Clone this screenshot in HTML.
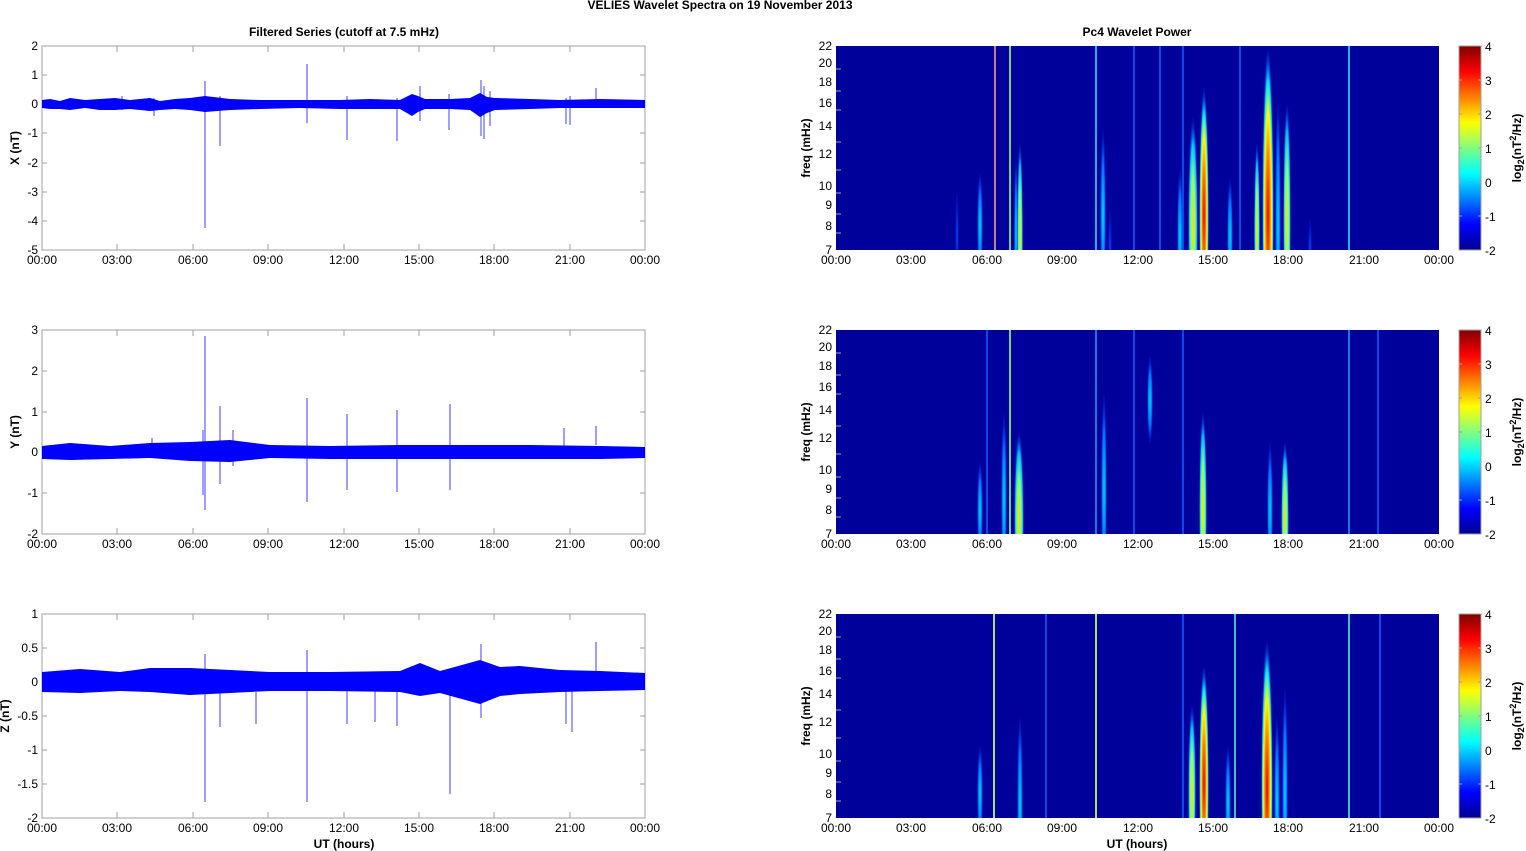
<!DOCTYPE html>
<html><head><meta charset="utf-8"><style>
html,body{margin:0;padding:0;background:#fff;width:1526px;height:851px;overflow:hidden;}
svg{display:block;font-family:"Liberation Sans",Arial,sans-serif;}
.t{font-size:12px;fill:#000}
.b{font-size:12px;font-weight:bold;fill:#000}
.ax{fill:none;stroke:#a0a0a0;stroke-width:1}
.tk{stroke:#a0a0a0;stroke-width:1}
.sp{stroke:#0000ff;stroke-width:1;opacity:.75}
</style></head><body>
<svg width="1526" height="851" viewBox="0 0 1526 851" xmlns="http://www.w3.org/2000/svg" overflow="hidden">
<defs>
<clipPath id="cp"><rect x="836" y="0" width="603" height="204"/></clipPath>
<linearGradient id="jet" x1="0" y1="1" x2="0" y2="0">
<stop offset="0" stop-color="#00008f"/><stop offset=".125" stop-color="#0000ff"/>
<stop offset=".375" stop-color="#00ffff"/><stop offset=".625" stop-color="#ffff00"/>
<stop offset=".875" stop-color="#ff0000"/><stop offset="1" stop-color="#800000"/>
</linearGradient>
<radialGradient id="gR"><stop offset="0" stop-color="#e00000"/><stop offset=".35" stop-color="#ff8000"/><stop offset=".6" stop-color="#ffff00"/><stop offset=".8" stop-color="#00e0ff"/><stop offset="1" stop-color="#0030ff" stop-opacity="0"/></radialGradient>
<radialGradient id="gY"><stop offset="0" stop-color="#ffe000"/><stop offset=".45" stop-color="#80ff80"/><stop offset=".75" stop-color="#00c0ff"/><stop offset="1" stop-color="#0030ff" stop-opacity="0"/></radialGradient>
<radialGradient id="gC"><stop offset="0" stop-color="#00e0ff"/><stop offset=".6" stop-color="#0070ff"/><stop offset="1" stop-color="#0030ff" stop-opacity="0"/></radialGradient>
<radialGradient id="gB"><stop offset="0" stop-color="#0050ff"/><stop offset="1" stop-color="#0030ff" stop-opacity="0"/></radialGradient>
<g id="xt">
<text class="t" x="42" y="14" text-anchor="middle">00:00</text><text class="t" x="117" y="14" text-anchor="middle">03:00</text><text class="t" x="193" y="14" text-anchor="middle">06:00</text><text class="t" x="268" y="14" text-anchor="middle">09:00</text><text class="t" x="344" y="14" text-anchor="middle">12:00</text><text class="t" x="419" y="14" text-anchor="middle">15:00</text><text class="t" x="494" y="14" text-anchor="middle">18:00</text><text class="t" x="570" y="14" text-anchor="middle">21:00</text><text class="t" x="645" y="14" text-anchor="middle">00:00</text>
</g>
<g id="vt">
<path class="tk" d="M117 0v6M193 0v6M268 0v6M344 0v6M419 0v6M494 0v6M570 0v6M117 204v-6M193 204v-6M268 204v-6M344 204v-6M419 204v-6M494 204v-6M570 204v-6"/>
</g>
<g id="cb">
<rect x="1459" y="0" width="22" height="204" fill="url(#jet)" stroke="#a0a0a0"/>
<path class="tk" d="M1459 34h3M1459 68h3M1459 102h3M1459 136h3M1459 170h3M1481 34h-3M1481 68h-3M1481 102h-3M1481 136h-3M1481 170h-3"/>
<text class="t" x="1485" y="5">4</text><text class="t" x="1485" y="39">3</text><text class="t" x="1485" y="73">2</text><text class="t" x="1485" y="107">1</text><text class="t" x="1485" y="141">0</text><text class="t" x="1485" y="175">-1</text><text class="t" x="1485" y="209">-2</text>
<text class="b" transform="translate(1521 102) rotate(-90)" text-anchor="middle">log<tspan font-size="9" dy="3">2</tspan><tspan dy="-3">(nT</tspan><tspan font-size="9" dy="-5">2</tspan><tspan dy="5">/Hz)</tspan></text>
</g>
<g id="fy">
<text class="t" x="832" y="4" text-anchor="end">22</text><text class="t" x="832" y="21" text-anchor="end">20</text><text class="t" x="832" y="40" text-anchor="end">18</text><text class="t" x="832" y="61" text-anchor="end">16</text><text class="t" x="832" y="84" text-anchor="end">14</text><text class="t" x="832" y="112" text-anchor="end">12</text><text class="t" x="832" y="144" text-anchor="end">10</text><text class="t" x="832" y="163" text-anchor="end">9</text><text class="t" x="832" y="184" text-anchor="end">8</text><text class="t" x="832" y="208" text-anchor="end">7</text>
<text class="b" transform="translate(810 102) rotate(-90)" text-anchor="middle">freq (mHz)</text>
<path class="tk" d="M836 23h5M836 45h5M836 64h5M836 96h5M836 124h5M836 147h5M836 168h5M836 187h5"/>
</g>
</defs>

<text class="b" x="720" y="9" text-anchor="middle">VELIES Wavelet Spectra on 19 November  2013</text>
<text class="b" x="344" y="36" text-anchor="middle">Filtered Series (cutoff at 7.5 mHz)</text>
<text class="b" x="1137" y="36" text-anchor="middle">Pc4 Wavelet Power</text>

<g transform="translate(0,46)">
<rect x="42" y="0" width="603" height="204" class="ax"/>
<use href="#vt"/>
<path class="tk" d="M42 29h5M42 58h5M42 87h5M42 117h5M42 146h5M42 175h5M645 29h-5M645 58h-5M645 87h-5M645 117h-5M645 146h-5M645 175h-5"/>
<text class="t" x="38" y="4" text-anchor="end">2</text><text class="t" x="38" y="33" text-anchor="end">1</text><text class="t" x="38" y="62" text-anchor="end">0</text><text class="t" x="38" y="91" text-anchor="end">-1</text><text class="t" x="38" y="121" text-anchor="end">-2</text><text class="t" x="38" y="150" text-anchor="end">-3</text><text class="t" x="38" y="179" text-anchor="end">-4</text><text class="t" x="38" y="208" text-anchor="end">-5</text>
<text class="b" transform="translate(19 102) rotate(-90)" text-anchor="middle">X (nT)</text>
<path fill="#0000ff" d="M42 54 L50 53 L60 55 L70 52 L85 54 L100 53 L115 52 L130 54 L150 52 L160 55 L175 53 L190 52 L205 50 L230 53 L260 54 L300 54 L340 54 L370 53 L400 54 L412 48 L418 50 L425 53 L450 53 L470 52 L480 47 L487 51 L495 52 L530 53 L560 54 L600 53 L645 54 L645 62 L600 62 L560 62 L530 63 L495 64 L487 67 L480 71 L470 64 L450 63 L425 63 L418 66 L412 70 L400 63 L370 63 L340 63 L300 62 L260 63 L230 64 L205 66 L190 64 L175 63 L160 64 L150 65 L130 63 L115 64 L100 64 L85 62 L70 64 L60 63 L50 63 L42 62Z"/>
<path class="sp" d="M205 35V182M220 50V100M307 18V77M347 50V94M397 52V95M420 40V75M449 48V84M481 34V90M484 40V93M490 45V80M566 52V78M570 50V79M596 42V60M122 50V64M154 52V70"/>
</g>
<g transform="translate(0,250)"><use href="#xt"/></g>

<g transform="translate(0,330)">
<rect x="42" y="0" width="603" height="204" class="ax"/>
<use href="#vt"/>
<path class="tk" d="M42 41h5M42 82h5M42 122h5M42 163h5M645 41h-5M645 82h-5M645 122h-5M645 163h-5"/>
<text class="t" x="38" y="4" text-anchor="end">3</text><text class="t" x="38" y="45" text-anchor="end">2</text><text class="t" x="38" y="86" text-anchor="end">1</text><text class="t" x="38" y="126" text-anchor="end">0</text><text class="t" x="38" y="167" text-anchor="end">-1</text><text class="t" x="38" y="208" text-anchor="end">-2</text>
<text class="b" transform="translate(19 102) rotate(-90)" text-anchor="middle">Y (nT)</text>
<path fill="#0000ff" d="M42 116 L70 113 L110 116 L150 113 L190 112 L230 110 L270 115 L330 116 L400 115 L470 115 L530 115 L600 116 L645 117 L645 128 L600 129 L530 129 L470 129 L400 129 L330 129 L270 128 L230 132 L190 131 L150 128 L110 129 L70 130 L42 129Z"/>
<path class="sp" d="M205 6V180M220 76V154M233 100V136M307 68V172M347 84V160M397 80V162M450 74V160M203 100V165M596 96V115M564 98V128M152 108V128"/>
</g>
<g transform="translate(0,534)"><use href="#xt"/></g>

<g transform="translate(0,614)">
<rect x="42" y="0" width="603" height="204" class="ax"/>
<use href="#vt"/>
<path class="tk" d="M42 34h5M42 68h5M42 102h5M42 136h5M42 170h5M645 34h-5M645 68h-5M645 102h-5M645 136h-5M645 170h-5"/>
<text class="t" x="38" y="4" text-anchor="end">1</text><text class="t" x="38" y="38" text-anchor="end">0.5</text><text class="t" x="38" y="72" text-anchor="end">0</text><text class="t" x="38" y="106" text-anchor="end">-0.5</text><text class="t" x="38" y="140" text-anchor="end">-1</text><text class="t" x="38" y="174" text-anchor="end">-1.5</text><text class="t" x="38" y="208" text-anchor="end">-2</text>
<text class="b" transform="translate(9 102) rotate(-90)" text-anchor="middle">Z (nT)</text>
<path fill="#0000ff" d="M42 58 L80 55 L120 58 L150 54 L190 54 L230 56 L270 58 L330 58 L400 57 L420 49 L440 57 L480 46 L500 53 L520 52 L560 56 L600 57 L645 59 L645 76 L600 77 L560 78 L520 80 L500 82 L480 90 L440 79 L420 82 L400 78 L330 77 L270 77 L230 79 L190 81 L150 78 L120 77 L80 79 L42 78Z"/>
<path class="sp" d="M205 40V188M220 70V113M256 78V110M307 36V188M347 70V110M375 70V108M397 70V112M450 60V180M481 30V104M566 60V110M572 60V118M596 28V60"/>
</g>
<g transform="translate(0,818)"><use href="#xt"/></g>
<text class="b" x="344" y="848" text-anchor="middle">UT (hours)</text>

<g transform="translate(0,46)">
<rect x="836" y="0" width="603" height="204" fill="#00009a"/>
<g clip-path="url(#cp)">
<ellipse cx="980" cy="180" rx="3" ry="55" fill="url(#gC)"/>
<ellipse cx="957" cy="190" rx="2" ry="50" fill="url(#gB)"/>
<ellipse cx="1020" cy="190" rx="3" ry="95" fill="url(#gY)"/>
<ellipse cx="1016" cy="190" rx="2" ry="80" fill="url(#gC)"/>
<ellipse cx="1103" cy="170" rx="3" ry="90" fill="url(#gC)"/>
<ellipse cx="1110" cy="200" rx="2" ry="40" fill="url(#gB)"/>
<ellipse cx="1180" cy="190" rx="3" ry="70" fill="url(#gC)"/>
<ellipse cx="1193" cy="180" rx="5" ry="110" fill="url(#gY)"/>
<ellipse cx="1204" cy="170" rx="5" ry="130" fill="url(#gR)"/>
<ellipse cx="1230" cy="190" rx="3" ry="60" fill="url(#gC)"/>
<ellipse cx="1257" cy="185" rx="3" ry="90" fill="url(#gY)"/>
<ellipse cx="1268" cy="170" rx="6" ry="170" fill="url(#gR)"/>
<ellipse cx="1278" cy="180" rx="3" ry="130" fill="url(#gC)"/>
<ellipse cx="1287" cy="175" rx="4" ry="120" fill="url(#gY)"/>
<ellipse cx="1310" cy="200" rx="2" ry="30" fill="url(#gB)"/>
</g>
<path d="M995 0V204" stroke="#c08080" stroke-width="2"/>
<path d="M1010 0V204" stroke="#70d080" stroke-width="2"/>
<path d="M1096 0V204M1349 0V204" stroke="#20b0e0" stroke-width="2"/>
<path d="M1134 0V204M1183 0V204M1160 0V204M1240 0V204" stroke="#1060ff" stroke-width="1.5"/>
<use href="#fy"/>
<use href="#cb"/>
</g>
<g transform="translate(794,250)"><use href="#xt"/></g>

<g transform="translate(0,330)">
<rect x="836" y="0" width="603" height="204" fill="#00009a"/>
<g clip-path="url(#cp)">
<ellipse cx="980" cy="180" rx="3" ry="50" fill="url(#gC)"/>
<ellipse cx="1004" cy="170" rx="3" ry="90" fill="url(#gC)"/>
<ellipse cx="1019" cy="190" rx="5" ry="90" fill="url(#gY)"/>
<ellipse cx="1104" cy="160" rx="3" ry="100" fill="url(#gC)"/>
<ellipse cx="1150" cy="70" rx="3" ry="45" fill="url(#gC)"/>
<ellipse cx="1203" cy="180" rx="4" ry="100" fill="url(#gY)"/>
<ellipse cx="1270" cy="180" rx="3" ry="70" fill="url(#gC)"/>
<ellipse cx="1285" cy="190" rx="4" ry="80" fill="url(#gY)"/>
</g>
<path d="M1010 0V204" stroke="#70d080" stroke-width="2"/>
<path d="M1096 0V204M1349 0V204" stroke="#20a0f0" stroke-width="1.5"/>
<path d="M987 0V204M1134 0V204M1183 0V204M1378 0V204" stroke="#1060ff" stroke-width="1.5"/>
<use href="#fy"/>
<use href="#cb"/>
</g>
<g transform="translate(794,534)"><use href="#xt"/></g>

<g transform="translate(0,614)">
<rect x="836" y="0" width="603" height="204" fill="#00009a"/>
<g clip-path="url(#cp)">
<ellipse cx="980" cy="180" rx="3" ry="50" fill="url(#gC)"/>
<ellipse cx="1020" cy="190" rx="3" ry="90" fill="url(#gC)"/>
<ellipse cx="1192" cy="180" rx="4" ry="90" fill="url(#gY)"/>
<ellipse cx="1204" cy="170" rx="5" ry="120" fill="url(#gR)"/>
<ellipse cx="1228" cy="190" rx="3" ry="60" fill="url(#gC)"/>
<ellipse cx="1267" cy="175" rx="6" ry="150" fill="url(#gR)"/>
<ellipse cx="1277" cy="190" rx="3" ry="90" fill="url(#gC)"/>
<ellipse cx="1285" cy="180" rx="3" ry="110" fill="url(#gC)"/>
</g>
<path d="M994 0V204" stroke="#a0e070" stroke-width="2"/>
<path d="M1096 0V204" stroke="#b0e060" stroke-width="2"/>
<path d="M1235 0V204M1349 0V204" stroke="#40c0c0" stroke-width="2"/>
<path d="M1183 0V204M1046 0V204M1380 0V204" stroke="#1060ff" stroke-width="1.5"/>
<use href="#fy"/>
<use href="#cb"/>
</g>
<g transform="translate(794,818)"><use href="#xt"/></g>
<text class="b" x="1137" y="848" text-anchor="middle">UT (hours)</text>
</svg>
</body></html>
